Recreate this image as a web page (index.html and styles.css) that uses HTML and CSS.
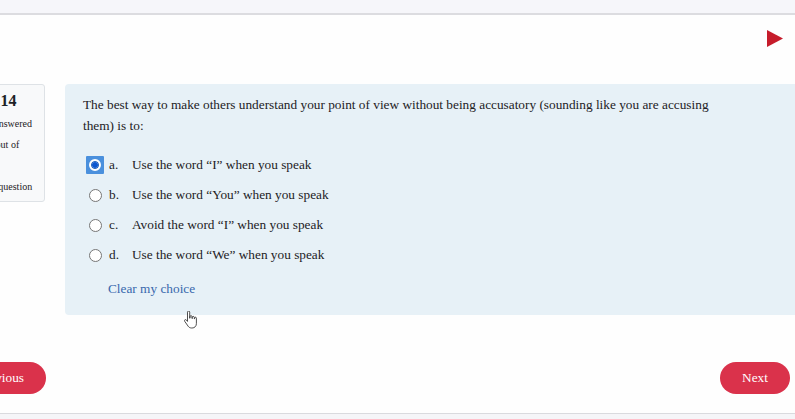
FILE: index.html
```html
<!DOCTYPE html>
<html>
<head>
<meta charset="utf-8">
<link rel="stylesheet" href="styles.css">
</head>
<body>
<div class="topbar"></div>
<div class="page">
  <div class="navrow">
    <svg class="play" width="16" height="17" viewBox="0 0 16 17"><polygon points="0,0 16,8.5 0,17" fill="#c61c2b"/></svg>
  </div>
  <div class="content">
    <div class="info">
      <div class="qno-line">Question <span class="qno">14</span></div>
      <div class="line">Not yet answered</div>
      <div class="line">Marked out of</div>
      <div class="line">1.00</div>
      <div class="line"><span class="flag"></span>Flag question</div>
    </div>
    <div class="formulation">
      <div class="qtext">The best way to make others understand your point of view without being accusatory (sounding like you are accusing them) is to:</div>
      <div class="answers">
        <div class="opt"><span class="radio sel"><span class="dot"></span></span><span class="letter">a.</span><span>Use the word “I” when you speak</span></div>
        <div class="opt"><span class="radio"></span><span class="letter">b.</span><span>Use the word “You” when you speak</span></div>
        <div class="opt"><span class="radio"></span><span class="letter">c.</span><span>Avoid the word “I” when you speak</span></div>
        <div class="opt"><span class="radio"></span><span class="letter">d.</span><span>Use the word “We” when you speak</span></div>
      </div>
      <div class="clear">Clear my choice</div>
    </div>
  </div>
  <div class="buttons">
    <span class="btn prev">Previous</span>
    <span class="btn next">Next</span>
  </div>
</div>
<div class="footer"></div>
<svg class="cursor" width="13" height="18" viewBox="0 0 13 18"><path d="M3.5 1.2c0-.7.5-1.2 1.1-1.2s1.1.5 1.1 1.2v6h.3V5.6c0-.6.5-1 1-1s1 .4 1 1v1.9h.3V6.4c0-.6.5-1 1-1s1 .4 1 1v1.4h.3v-.6c0-.6.4-1 .9-1s.9.4.9 1v5.3c0 2.6-1.7 4.5-4.3 4.5H7.6c-1.4 0-2.6-.6-3.4-1.7L.7 10.3c-.4-.5-.3-1.2.2-1.5.5-.3 1.1-.2 1.5.2l1.1 1.4z" fill="#fff" stroke="#222" stroke-width="0.8"/></svg>
</body>
</html>
```
FILE: styles.css
```css
html, body {
  margin: 0;
  padding: 0;
  background: #fefefe;
  font-family: "Liberation Serif", "Times New Roman", serif;
  color: #1d2125;
  overflow: hidden;
  width: 795px;
  height: 419px;
  position: relative;
}
.topbar {
  height: 13px;
  background: #f6f6fa;
  border-bottom: 2px solid #dcdce0;
}
.page {
  margin: 0 5px 0 -52px;
}
.navrow {
  display: flex;
  justify-content: flex-end;
  padding: 15px 7px 0 0;
  height: 17px;
}
.play { display: block; }
.content {
  display: flex;
  gap: 20px;
  margin-top: 37px;
  align-items: flex-start;
}
.info {
  width: 75px;
  flex: none;
  padding: 6px 7px 4px 13px;
  background: #f8f9fa;
  border: 1px solid #dee2e6;
  border-radius: 3px;
  font-size: 10px;
  white-space: nowrap;
  overflow: hidden;
}
.qno-line {
  font-size: 10px;
  height: 22px;
  line-height: 20px;
}
.qno {
  font-size: 16px;
  font-weight: bold;
}
.line {
  height: 20px;
  line-height: 20px;
  margin-top: 1px;
}
.flag {
  display: inline-block;
  width: 14px;
  height: 10px;
  margin-right: 2px;
}
.formulation {
  flex: 1;
  margin-right: -15px;
  background: #e7f1f7;
  border-radius: 4px;
  padding: 10px 19px 11px 18px;
  height: 210px;
}
.qtext {
  font-size: 13.3px;
  line-height: 21px;
  max-width: 650px;
}
.answers {
  margin-top: 14px;
}
.opt {
  display: flex;
  align-items: center;
  height: 30px;
  font-size: 13.3px;
}
.radio {
  box-sizing: border-box;
  width: 13px;
  height: 13px;
  border: 1px solid #767676;
  border-radius: 50%;
  background: #fff;
  margin: 0 7px 0 6px;
  display: flex;
  align-items: center;
  justify-content: center;
  flex: none;
}
.radio.sel {
  width: 18px;
  height: 18px;
  margin: 0 5px 0 3px;
  border: 3px solid #4a90dd;
  border-radius: 1px;
  background: #4a90dd;
  position: relative;
}
.radio.sel .dot {
  box-sizing: border-box;
  width: 12px;
  height: 12px;
  border-radius: 50%;
  background: #fff;
  border: 2px solid #fff;
  box-shadow: inset 0 0 0 1px #1b5fb8;
  display: block;
  position: relative;
}
.radio.sel .dot::after {
  content: "";
  position: absolute;
  left: 1px;
  top: 1px;
  width: 6px;
  height: 6px;
  border-radius: 50%;
  background: #0b57d0;
}
.letter {
  width: 23px;
  flex: none;
}
.clear {
  margin: 9px 0 0 25px;
  font-size: 13.3px;
  color: #3868ad;
  line-height: 20px;
}
.buttons {
  display: flex;
  justify-content: space-between;
  margin-top: 47px;
}
.btn {
  display: inline-flex;
  align-items: center;
  justify-content: center;
  height: 32px;
  border-radius: 16px;
  background: #da324b;
  color: #fff;
  font-size: 13.3px;
  box-sizing: border-box;
}
.prev {
  width: 98px;
  justify-content: flex-end;
  padding-right: 22px;
}
.next { width: 70px; }
.footer {
  margin-top: 19px;
  border-top: 1px solid #dadade;
  background: #f5f5f8;
  height: 10px;
}
.cursor {
  position: absolute;
  left: 184px;
  top: 311px;
}
```
